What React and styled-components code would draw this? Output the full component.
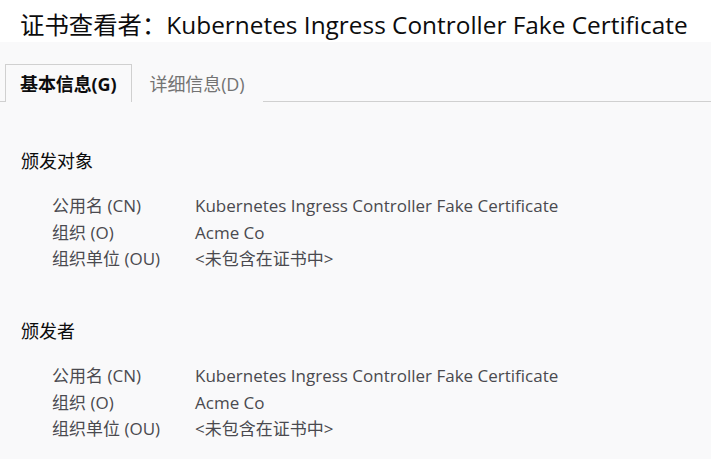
import React from 'react';
import styled, {createGlobalStyle} from 'styled-components';

const GlobalStyle = createGlobalStyle`
    body {
        margin: 0;
        background: #f9f9fa;
        font-family: "Open Sans", "Noto Sans CJK SC", sans-serif;
    }
`;

const Page = styled.div`
    width: 711px;
    height: 459px;
    overflow: hidden;
    background: #f9f9fa;
`;

const TitleBar = styled.div`
    height: 42px;
    box-sizing: border-box;
    padding: 5px 0 0 20px;
    background: #ffffff;
    display: flex;
    align-items: center;
`;

const Title = styled.h1`
    margin: 0;
    font-size: 24.4px;
    font-weight: 400;
    color: #0c0c0d;
    white-space: nowrap;
`;

const TabBar = styled.div`
    display: flex;
    margin-top: 22px;
    padding-left: 5px;
    border-bottom: 1px solid #d0d0d0;
    height: 37px;
`;

const Tab = styled.div`
    display: flex;
    align-items: center;
    box-sizing: border-box;
    height: 38px;
    margin-bottom: -1px;
    padding: 0 ${p => p.active ? '14px' : '17px'} 1px;
    font-size: 18px;
    letter-spacing: -0.1px;
    color: ${p => p.active ? '#0c0c0d' : '#737373'};
    font-weight: ${p => p.active ? 700 : 400};
    border: 1px solid ${p => p.active ? '#d0d0d0' : 'transparent'};
    border-bottom: none;
    background: #f9f9fa;
`;

const Body = styled.div`
    padding: 0 21px;
`;

const Section = styled.section`
    padding-top: ${p => p.first ? '45px' : '46.5px'};
`;

const Heading = styled.h2`
    margin: 0 0 21px;
    font-size: 18px;
    font-weight: 400;
    color: #0c0c0d;
`;

const Rows = styled.div`
    display: grid;
    grid-template-columns: 143px auto;
    row-gap: 3px;
    padding-left: 31px;
    font-size: 17px;
    line-height: 23.5px;
    color: #4a4a4f;
`;

const rows = [
    ['公用名 (CN)', 'Kubernetes Ingress Controller Fake Certificate'],
    ['组织 (O)', 'Acme Co'],
    ['组织单位 (OU)', '<未包含在证书中>'],
];

const CertSection = ({title, first}) => (
    <Section first={first}>
        <Heading>{title}</Heading>
        <Rows>
            {rows.map(([k, v]) => (
                <React.Fragment key={k}>
                    <span>{k}</span>
                    <span>{v}</span>
                </React.Fragment>
            ))}
        </Rows>
    </Section>
);

const App = () => (
    <Page>
        <GlobalStyle/>
        <TitleBar>
            <Title>证书查看者：Kubernetes Ingress Controller Fake Certificate</Title>
        </TitleBar>
        <TabBar>
            <Tab active>基本信息(G)</Tab>
            <Tab>详细信息(D)</Tab>
        </TabBar>
        <Body>
            <CertSection title="颁发对象" first/>
            <CertSection title="颁发者"/>
        </Body>
    </Page>
);

export default App;
